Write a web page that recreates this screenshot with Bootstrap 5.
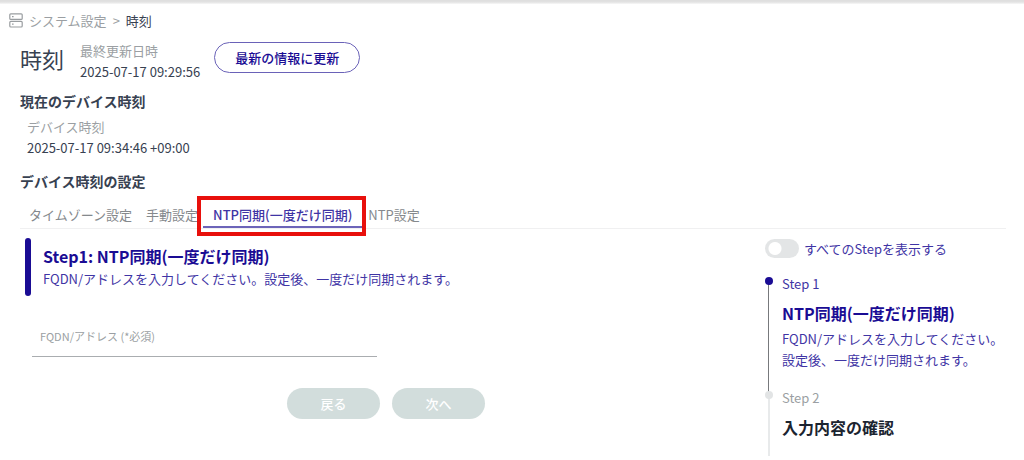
<!DOCTYPE html>
<html lang="ja">
<head>
<meta charset="utf-8">
<meta name="viewport" content="width=device-width, initial-scale=1">
<title>時刻</title>
<link href="https://cdn.jsdelivr.net/npm/bootstrap@5.3.0/dist/css/bootstrap.min.css" rel="stylesheet">
<style>
  :root { --ink: #374151; --brand: #1a0c94; --brand-soft: #3f35a5; --muted: #9b9fa3; }
  body { font-family: "Noto Sans CJK JP", sans-serif; font-size: 13px; line-height: 21px; color: var(--ink); background: #fff; }
  .top-edge { height: 4px; background: linear-gradient(#dedede, #e2e2e2 50%, #f8f8f8); }
  .page { padding: 6px 18px 4px 20px; }
  .crumbs { margin-left: -11px; gap: 6px; }
  .crumbs a, .crumbs .sep, .caption-text { color: var(--muted); }
  .page-title { font-size: 22px; line-height: 36px; font-weight: 400; }
  .page-head { margin-top: 9px; gap: 16px; }
  .section-title { font-size: 14px; line-height: 20px; font-weight: 700; }
  .first-section { margin-top: 9px; }
  .btn-refresh { width: 146px; height: 31px; margin: 2px 0 0 -2px; padding: 0; font-size: 13px; font-weight: 500; color: var(--brand); border: 1px solid #6a62b8; }
  .btn-refresh:hover { background: var(--brand); color: #fff; }
  .device-time { margin: 5px 0 13px 7px; }
  .tab-bar { margin-top: 10px; padding-left: 4px; border-bottom: 1px solid #f0f0f1; }
  .tab-bar .nav-link { padding: 3px 5px 1px; line-height: 21px; color: #85898d; border-bottom: 2px solid transparent; white-space: nowrap; }
  .tab-bar .nav-item + .nav-item:not(.marked, .after-marked) { margin-left: 4px; }
  .tab-bar .nav-link.active { padding: 3px 11px 1px 10px; color: var(--brand-soft); font-weight: 500; border-color: #6c64b9; }
  .marked::after { content: ""; position: absolute; inset: -5px -3px -8px -6px; border: 4px solid #e8100c; pointer-events: none; }
  .work-area { margin-top: 9px; }
  .intro { margin-left: 5px; padding: 6px 0 7px 12px; position: relative; border-left: 6px solid transparent; }
  .intro::before { content: ""; position: absolute; left: -6px; top: 0; bottom: 0; width: 6px; border-radius: 3px; background: var(--brand); }
  .step-title { font-size: 16px; line-height: 24px; font-weight: 700; color: var(--brand); }
  .brand-text { color: var(--brand-soft); }
  .setup-form { max-width: 465px; }
  .field { margin: 20px 0 0 12px; max-width: 345px; }
  .field > .form-control { height: 41px; min-height: 0; padding: 14px 7px 4px; border: 0; border-bottom: 1px solid #aaadb0; border-radius: 0; box-shadow: none; font-size: 13px; }
  .field > label { padding: 9px 7px; font-size: 11px; line-height: 21px; color: var(--muted); }
  .actions { margin-top: 31px; gap: 12px; }
  .btn-step { width: 93px; height: 31px; padding: 0; font-size: 13px; font-weight: 500; }
  .btn-step, .btn-step:disabled { color: #fff; background: #d2dddc; border: 0; opacity: 1; }
  .side { width: 241px; }
  .side .form-check { padding: 0; min-height: 0; gap: 5px; }
  .side .form-check-input { width: 34px; height: 19px; margin: 0; border: 0; background: radial-gradient(circle at 10px 50%, #fff 6px, #fff0 7px) #e3e5e6; }
  .side .form-check-input:checked { background: radial-gradient(circle at 24px 50%, #fff 6px, #fff0 7px) var(--brand); }
  .steps { margin-top: 14px; }
  .steps li { position: relative; padding: 0 0 17px 17px; }
  .steps li::before { content: ""; position: absolute; left: 0; top: 4px; width: 8px; height: 8px; border-radius: 50%; background: #e2e4e5; z-index: 1; }
  .steps li::after { content: ""; position: absolute; left: 3px; top: 8px; bottom: 0; width: 2px; background: #e8eaeb; }
  .steps li.current::before { background: var(--brand); }
  .steps li.current::after { width: 1px; bottom: -8px; background: #77797c; }
  .steps .step-title { margin-top: 7px; }
  .steps .upcoming .step-title { color: #1b2430; }
  .steps p { margin-top: 3px; }
</style>
</head>
<body>
<div class="top-edge"></div>
<main class="page">
  <nav class="crumbs d-flex align-items-center" aria-label="パンくず">
    <svg width="14" height="15" viewBox="0 0 14 15" fill="none" stroke="#999da0" stroke-width="1.2" aria-hidden="true">
      <rect x=".8" y=".8" width="12.4" height="5.6" rx="1"/>
      <rect x=".8" y="8.4" width="12.4" height="5.6" rx="1"/>
      <path d="M3 3.6h1.6M3 11.2h1.6"/>
    </svg>
    <a href="#" class="text-decoration-none">システム設定</a>
    <span class="sep">&gt;</span>
    <span aria-current="page">時刻</span>
  </nav>

  <header class="page-head d-flex flex-wrap">
    <h1 class="page-title mb-0">時刻</h1>
    <div>
      <div class="caption-text">最終更新日時</div>
      <div>2025-07-17 09:29:56</div>
    </div>
    <button type="button" class="btn btn-refresh rounded-pill">最新の情報に更新</button>
  </header>

  <h2 class="section-title first-section mb-0">現在のデバイス時刻</h2>
  <div class="device-time">
    <div class="caption-text">デバイス時刻</div>
    <div>2025-07-17 09:34:46 +09:00</div>
  </div>

  <h2 class="section-title mb-0">デバイス時刻の設定</h2>
  <ul class="tab-bar nav">
    <li class="nav-item"><a class="nav-link" href="#">タイムゾーン設定</a></li>
    <li class="nav-item"><a class="nav-link" href="#">手動設定</a></li>
    <li class="nav-item marked position-relative"><a class="nav-link active" aria-current="true" href="#">NTP同期(一度だけ同期)</a></li>
    <li class="nav-item after-marked"><a class="nav-link" href="#">NTP設定</a></li>
  </ul>

  <div class="work-area d-flex justify-content-between gap-4">
    <section class="flex-grow-1">
      <div class="intro">
        <h3 class="step-title mb-0">Step1: NTP同期(一度だけ同期)</h3>
        <p class="brand-text mb-0">FQDN/アドレスを入力してください。設定後、一度だけ同期されます。</p>
      </div>
      <form class="setup-form">
        <div class="field form-floating">
          <input type="text" class="form-control" id="fqdn" placeholder=" ">
          <label for="fqdn">FQDN/アドレス (*必須)</label>
        </div>
        <div class="actions d-flex justify-content-end">
          <button type="button" class="btn btn-step rounded-pill" disabled>戻る</button>
          <button type="submit" class="btn btn-step rounded-pill" disabled>次へ</button>
        </div>
      </form>
    </section>

    <aside class="side flex-shrink-0">
      <div class="form-check form-switch d-flex align-items-center mb-0">
        <input class="form-check-input float-none" type="checkbox" role="switch" id="showAll">
        <label class="brand-text" for="showAll">すべてのStepを表示する</label>
      </div>
      <ol class="steps list-unstyled mb-0">
        <li class="current">
          <div class="brand-text">Step 1</div>
          <h3 class="step-title mb-0">NTP同期(一度だけ同期)</h3>
          <p class="brand-text mb-0">FQDN/アドレスを入力してください。<br>設定後、一度だけ同期されます。</p>
        </li>
        <li class="upcoming">
          <div class="caption-text">Step 2</div>
          <h3 class="step-title mb-0">入力内容の確認</h3>
        </li>
      </ol>
    </aside>
  </div>
</main>
<script src="https://cdn.jsdelivr.net/npm/bootstrap@5.3.0/dist/js/bootstrap.bundle.min.js"></script>
</body>
</html>
